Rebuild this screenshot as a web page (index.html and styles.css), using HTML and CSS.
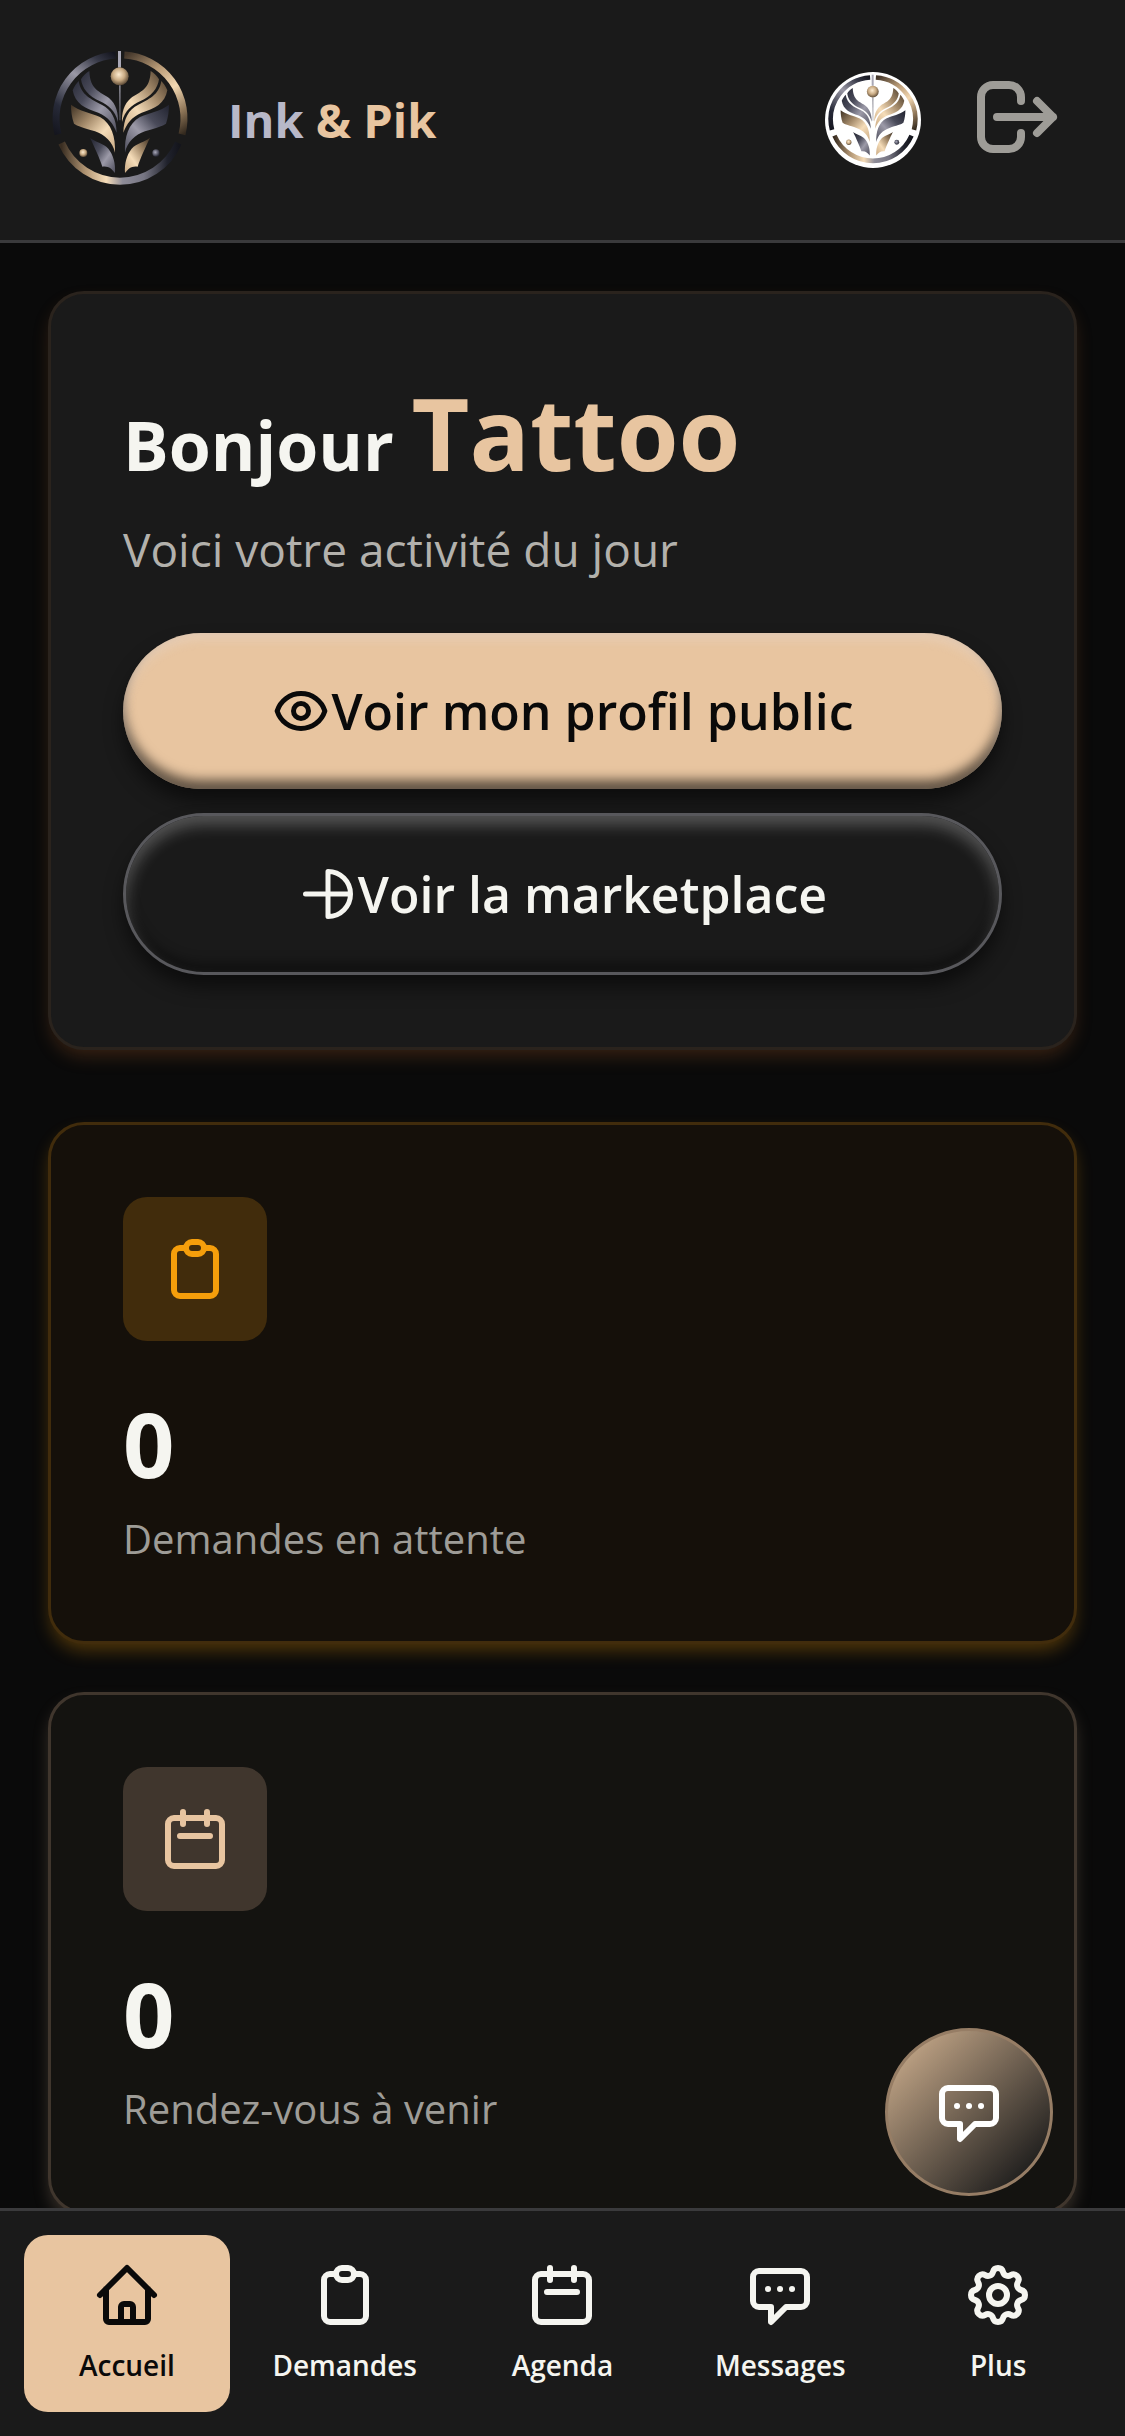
FILE: index.html
```html
<!DOCTYPE html>
<html lang="fr">
<head>
<meta charset="utf-8">
<meta name="viewport" content="width=device-width, initial-scale=1">
<title>Ink &amp; Pik – Accueil</title>
<link rel="stylesheet" href="styles.css">
</head>
<body>
<svg class="defs" aria-hidden="true">
  <defs>
    <linearGradient id="steel" x1="0" y1="0" x2="1" y2="1">
      <stop offset="0" stop-color="#20222e"/><stop offset=".35" stop-color="#4a4b5a"/><stop offset=".62" stop-color="#9c9aa8"/><stop offset="1" stop-color="#4c4c5a"/>
    </linearGradient>
    <linearGradient id="gold" x1="0" y1="0" x2="1" y2="1">
      <stop offset="0" stop-color="#3d3022"/><stop offset=".35" stop-color="#a48a6a"/><stop offset=".65" stop-color="#f5dcb8"/><stop offset="1" stop-color="#c9a982"/>
    </linearGradient>
    <linearGradient id="ringSteel" gradientUnits="userSpaceOnUse" x1="35" y1="280" x2="215" y2="40">
      <stop offset="0" stop-color="#14151e"/><stop offset=".25" stop-color="#272a38"/><stop offset=".6" stop-color="#9a98a5"/><stop offset=".85" stop-color="#363846"/><stop offset="1" stop-color="#14151e"/>
    </linearGradient>
    <linearGradient id="ringGold" gradientUnits="userSpaceOnUse" x1="240" y1="40" x2="410" y2="280">
      <stop offset="0" stop-color="#43362a"/><stop offset=".3" stop-color="#b89a76"/><stop offset=".55" stop-color="#f3d8b2"/><stop offset=".8" stop-color="#8f7658"/><stop offset="1" stop-color="#33291e"/>
    </linearGradient>
    <linearGradient id="ringBase" gradientUnits="userSpaceOnUse" x1="50" y1="0" x2="402" y2="0">
      <stop offset="0" stop-color="#3a2e22"/><stop offset=".2" stop-color="#b09472"/><stop offset=".38" stop-color="#f5dcb8"/><stop offset=".52" stop-color="#8e8c98"/><stop offset=".7" stop-color="#777683"/><stop offset=".9" stop-color="#20222c"/><stop offset="1" stop-color="#14151c"/>
    </linearGradient>
    <radialGradient id="bead" cx=".45" cy=".4" r=".6">
      <stop offset="0" stop-color="#fdebd0"/><stop offset=".55" stop-color="#c9ab84"/><stop offset="1" stop-color="#5c4a36"/>
    </radialGradient>
    <radialGradient id="beadSteel" cx=".4" cy=".4" r=".6">
      <stop offset="0" stop-color="#a9a9bb"/><stop offset="1" stop-color="#262733"/>
    </radialGradient>
    <path id="leafTop" d="M133 87C135 145 165 148 192 168C214 186 220 215 219 240C210 205 190 190 165 178C130 162 112 140 108 112C114 102 124 92 133 87ZM101 117C108 160 140 172 170 188C200 203 214 230 215 272C205 245 190 225 160 212C120 200 90 185 83 145C88 133 94 124 101 117Z"/>
    <path id="leafMid" d="M78 188C105 208 135 212 165 225C200 245 212 285 210 332C203 300 180 278 150 268C120 258 95 252 87 245C80 225 78 205 78 188Z"/>
    <path id="leafLow" d="M135 287C150 300 175 303 190 320C205 338 212 365 210 393C200 380 190 371 172 374C165 350 148 315 135 287Z"/>
  </defs>
  <symbol id="emblem" viewBox="0 0 450 450">
    <g fill="none" stroke-width="21">
      <path stroke="url(#ringSteel)" d="M212 39A191 191 0 0 0 39 277"/>
      <path stroke="url(#ringGold)" d="M238 39A191 191 0 0 1 411 277"/>
      <path stroke="url(#ringBase)" d="M50 303A191 191 0 0 0 400 303"/>
    </g>
    <path fill="#a9a8b6" d="M219 27h9v50h-9z"/>
    <path fill="#85848f" d="M222 130h5l-1 105h-2z"/>
    <circle cx="224" cy="103" r="27" fill="url(#bead)"/>
    <use href="#leafTop" fill="url(#steel)"/>
    <use href="#leafMid" fill="url(#gold)"/>
    <use href="#leafLow" fill="url(#steel)"/>
    <g transform="matrix(-1 0 0 1 450 0)">
      <use href="#leafTop" fill="url(#gold)"/>
      <use href="#leafMid" fill="url(#steel)"/>
      <use href="#leafLow" fill="url(#gold)"/>
    </g>
    <circle cx="115" cy="333" r="12" fill="url(#bead)"/>
    <circle cx="333" cy="333" r="11" fill="url(#beadSteel)"/>
  </symbol>
  <symbol id="i-clipboard" viewBox="0 0 24 24"><path d="M9 5H7a2 2 0 0 0-2 2v12a2 2 0 0 0 2 2h10a2 2 0 0 0 2-2V7a2 2 0 0 0-2-2h-2M9 5a2 2 0 0 0 2 2h2a2 2 0 0 0 2-2M9 5a2 2 0 0 1 2-2h2a2 2 0 0 1 2 2"/></symbol>
  <symbol id="i-calendar" viewBox="0 0 24 24"><path d="M8 7V3m8 4V3m-9 8h10M5 21h14a2 2 0 0 0 2-2V7a2 2 0 0 0-2-2H5a2 2 0 0 0-2 2v12a2 2 0 0 0 2 2z"/></symbol>
  <symbol id="i-chat" viewBox="0 0 24 24"><path d="M8 10h.01M12 10h.01M16 10h.01M9 16H5a2 2 0 0 1-2-2V6a2 2 0 0 1 2-2h14a2 2 0 0 1 2 2v8a2 2 0 0 1-2 2h-5l-5 5v-5z"/></symbol>
</svg>

<header class="topbar">
  <a class="brand" href="#">
    <svg class="brand-logo" viewBox="9 18 432 432" aria-hidden="true"><use href="#emblem" width="450" height="450"/></svg>
    <span class="brand-name"><span class="brand-ink">Ink</span> &amp; Pik</span>
  </a>
  <div class="topbar-actions">
    <a class="avatar" href="#" aria-label="Mon profil"><svg viewBox="7 14 436 436" aria-hidden="true"><use href="#emblem" width="450" height="450"/></svg></a>
    <button class="logout" type="button" aria-label="Se déconnecter">
      <svg class="icon" viewBox="0 0 24 24" aria-hidden="true"><path d="M17 16l4-4m0 0l-4-4m4 4H7m6 4v1a3 3 0 0 1-3 3H6a3 3 0 0 1-3-3V7a3 3 0 0 1 3-3h4a3 3 0 0 1 3 3v1"/></svg>
    </button>
  </div>
</header>

<main class="content">
  <section class="card welcome">
    <h1 class="greeting">Bonjour <span class="greeting-name">Tattoo</span></h1>
    <p class="subtitle">Voici votre activité du jour</p>
    <div class="actions">
      <button class="pill pill-primary" type="button">
        <svg class="icon" viewBox="0 0 24 24" aria-hidden="true"><path d="M15 12a3 3 0 1 1-6 0 3 3 0 0 1 6 0z"/><path d="M2.458 12C3.732 7.943 7.523 5 12 5c4.478 0 8.268 2.943 9.542 7-1.274 4.057-5.064 7-9.542 7-4.477 0-8.268-2.943-9.542-7z"/></svg>
        <span>Voir mon profil public</span>
      </button>
      <button class="pill pill-secondary" type="button">
        <svg class="icon" viewBox="0 0 24 24" aria-hidden="true"><path d="M21 12a9 9 0 0 1-9 9m9-9a9 9 0 0 0-9-9m9 9H3m9 9V3"/></svg>
        <span>Voir la marketplace</span>
      </button>
    </div>
  </section>

  <div class="stats">
    <section class="card stat stat-pending">
      <div class="stat-tile"><svg class="icon" aria-hidden="true"><use href="#i-clipboard"/></svg></div>
      <p class="stat-value">0</p>
      <p class="stat-label">Demandes en attente</p>
    </section>
    <section class="card stat stat-agenda">
      <div class="stat-tile"><svg class="icon" aria-hidden="true"><use href="#i-calendar"/></svg></div>
      <p class="stat-value">0</p>
      <p class="stat-label">Rendez-vous à venir</p>
    </section>
  </div>
</main>

<button class="fab" type="button" aria-label="Ouvrir le chat"><svg class="icon" aria-hidden="true"><use href="#i-chat"/></svg></button>

<nav class="tabbar" aria-label="Navigation principale">
  <a class="tab tab-active" href="#" aria-current="page">
    <svg class="icon" viewBox="0 0 24 24" aria-hidden="true"><path d="M3 12l2-2m0 0l7-7 7 7M5 10v10a1 1 0 0 0 1 1h3m10-11l2 2m-2-2v10a1 1 0 0 1-1 1h-3m-6 0a1 1 0 0 0 1-1v-4a1 1 0 0 1 1-1h2a1 1 0 0 1 1 1v4a1 1 0 0 0 1 1m-6 0h6"/></svg>
    <span>Accueil</span>
  </a>
  <a class="tab" href="#"><svg class="icon" aria-hidden="true"><use href="#i-clipboard"/></svg><span>Demandes</span></a>
  <a class="tab" href="#"><svg class="icon" aria-hidden="true"><use href="#i-calendar"/></svg><span>Agenda</span></a>
  <a class="tab" href="#"><svg class="icon" aria-hidden="true"><use href="#i-chat"/></svg><span>Messages</span></a>
  <a class="tab" href="#">
    <svg class="icon" viewBox="0 0 24 24" aria-hidden="true"><path d="M10.325 4.317c.426-1.756 2.924-1.756 3.35 0a1.724 1.724 0 0 0 2.573 1.066c1.543-.94 3.31.826 2.37 2.37a1.724 1.724 0 0 0 1.065 2.572c1.756.426 1.756 2.924 0 3.35a1.724 1.724 0 0 0-1.066 2.573c.94 1.543-.826 3.31-2.37 2.37a1.724 1.724 0 0 0-2.572 1.065c-.426 1.756-2.924 1.756-3.35 0a1.724 1.724 0 0 0-2.573-1.066c-1.543.94-3.31-.826-2.37-2.37a1.724 1.724 0 0 0-1.065-2.572c-1.756-.426-1.756-2.924 0-3.35a1.724 1.724 0 0 0 1.066-2.573c-.94-1.543.826-3.31 2.37-2.37.996.608 2.296.07 2.572-1.065z"/><path d="M15 12a3 3 0 1 1-6 0 3 3 0 0 1 6 0z"/></svg>
    <span>Plus</span>
  </a>
</nav>
</body>
</html>
```
FILE: styles.css
```css
:root {
  --bg: #0a0a0a;
  --surface: #1a1a1a;
  --line: #3a3a3c;
  --accent: #e8c5a0;
  --steel: #b8b8c8;
  --text: #f5f5f0;
  --muted: #9e9c97;
}

* {
  box-sizing: border-box;
}

body {
  margin: 0;
  min-height: 100vh;
  background: var(--bg);
  color: var(--text);
  font-family: "Open Sans", "Noto Sans", sans-serif;
}

h1,
p {
  margin: 0;
}

button {
  border: 0;
  background: none;
  color: inherit;
  font: inherit;
  cursor: pointer;
}

a {
  color: inherit;
  text-decoration: none;
}

.defs {
  position: absolute;
  width: 0;
  height: 0;
}

.icon {
  display: block;
  flex: none;
  width: 72px;
  height: 72px;
  fill: none;
  stroke: currentColor;
  stroke-width: 2;
  stroke-linecap: round;
  stroke-linejoin: round;
}

/* Top bar */
.topbar {
  display: flex;
  align-items: center;
  justify-content: space-between;
  padding: 48px;
  background: var(--surface);
  border-bottom: 3px solid var(--line);
}

.brand {
  display: flex;
  align-items: center;
  gap: 36px;
}

.brand-logo {
  display: block;
  width: 144px;
  height: 144px;
}

.brand-name {
  color: var(--accent);
  font-size: 47px;
  line-height: 72px;
  font-weight: 700;
}

.brand-ink {
  color: var(--steel);
}

.topbar-actions {
  display: flex;
  align-items: center;
  gap: 36px;
}

.avatar {
  width: 96px;
  height: 96px;
  overflow: hidden;
  border-radius: 50%;
  background: #fff;
}

.avatar svg {
  display: block;
  width: 100%;
  height: 100%;
}

.logout {
  padding: 9px 12px 15px;
  color: var(--muted);
}

.logout .icon {
  width: 96px;
  height: 96px;
}

/* Cards */
.content {
  display: flex;
  flex-direction: column;
  gap: 72px;
  padding: 48px 48px 216px;
}

.card {
  padding: 72px;
  border: 3px solid;
  border-radius: 36px;
}

.welcome {
  background: var(--surface);
  border-color: #2a231d;
  box-shadow: 0 9px 18px -3px rgba(190, 105, 45, 0.25);
}

.greeting {
  margin-bottom: 15px;
  font-size: 68px;
  line-height: 96px;
  font-weight: 700;
}

.greeting-name {
  color: var(--accent);
  font-size: 100px;
  line-height: 132px;
}

.subtitle {
  color: #b3b1ac;
  font-size: 46px;
  line-height: 72px;
}

.actions {
  display: grid;
  gap: 24px;
  margin-top: 48px;
}

.pill {
  display: flex;
  align-items: center;
  justify-content: center;
  width: 100%;
  padding: 36px;
  border-radius: 84px;
  font-size: 50px;
  line-height: 84px;
  font-weight: 600;
}

.pill .icon {
  width: 60px;
  height: 60px;
}

.pill-primary {
  background: var(--accent);
  color: var(--bg);
  box-shadow: 0 12px 18px rgba(0, 0, 0, 0.5), inset 0 6px 12px rgba(230, 230, 240, 0.3), inset 0 -9px 12px rgba(0, 0, 0, 0.6);
}

.pill-secondary {
  border: 3px solid #58585c;
  background: var(--surface);
  box-shadow: 0 12px 18px rgba(0, 0, 0, 0.5), inset 0 9px 15px rgba(255, 255, 255, 0.26), inset 0 -9px 12px rgba(0, 0, 0, 0.4);
}

.stats {
  display: grid;
  gap: 48px;
}

.stat-tile {
  display: grid;
  place-items: center;
  width: 144px;
  height: 144px;
  margin-bottom: 48px;
  border-radius: 24px;
}

.stat-value {
  margin-bottom: 12px;
  font-size: 90px;
  line-height: 108px;
  font-weight: 700;
}

.stat-label {
  color: var(--muted);
  font-size: 40px;
  line-height: 60px;
}

.stat-pending {
  background: #15100a;
  border-color: #412c0c;
  box-shadow: 0 9px 18px -3px rgba(245, 158, 11, 0.3);
}

.stat-pending .stat-tile {
  background: #412c0c;
  color: #f59e0b;
}

.stat-agenda {
  background: #141310;
  border-color: #40362d;
  box-shadow: 0 9px 18px -3px rgba(232, 197, 160, 0.25);
}

.stat-agenda .stat-tile {
  background: #40362d;
  color: var(--accent);
}

/* Floating chat button */
.fab {
  position: fixed;
  right: 72px;
  bottom: 240px;
  display: grid;
  place-items: center;
  width: 168px;
  height: 168px;
  padding: 0;
  border: 3px solid #967d65;
  border-radius: 50%;
  background: linear-gradient(135deg, #d5b593 0%, #1a1a1a 90%);
  color: #fff;
}

/* Bottom navigation */
.tabbar {
  position: fixed;
  inset: auto 0 0;
  display: grid;
  grid-template-columns: repeat(5, 1fr);
  gap: 12px;
  padding: 24px;
  background: var(--surface);
  border-top: 3px solid var(--line);
}

.tab {
  display: flex;
  flex-direction: column;
  align-items: center;
  gap: 12px;
  padding: 24px 0;
  border-radius: 24px;
  font-size: 28px;
  line-height: 45px;
  font-weight: 600;
}

.tab-active {
  background: var(--accent);
  color: var(--bg);
}
```
